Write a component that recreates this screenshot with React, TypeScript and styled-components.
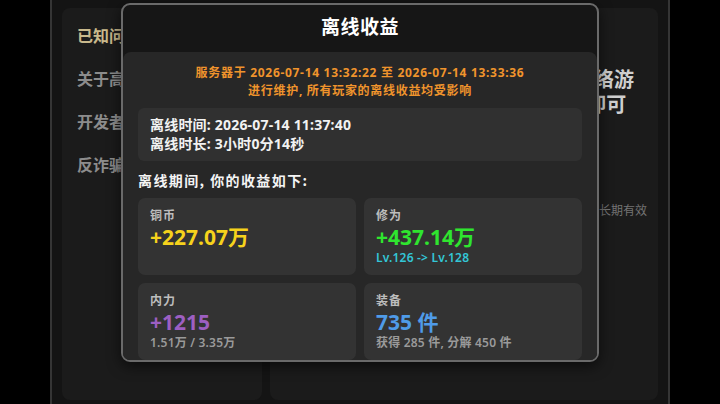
import React from "react";
import styled, { createGlobalStyle } from "styled-components";

const GlobalStyle = createGlobalStyle`
  html, body {
    margin: 0;
    padding: 0;
    background: #000;
  }
  body {
    font-family: "Noto Sans", "Noto Sans CJK SC", sans-serif;
    color: #fff;
  }
  * {
    box-sizing: border-box;
  }
`;

const MENU_ITEMS = ["已知问题", "关于高自由度", "开发者的话", "反诈骗提醒"];

const NOTICE_LINES = [
  "服务器于 2026-07-14 13:32:22 至 2026-07-14 13:33:36",
  "进行维护, 所有玩家的离线收益均受影响",
];

const REWARDS = [
  { label: "铜币", value: "+227.07万", color: "#f6d21c", sub: "", subColor: "" },
  { label: "修为", value: "+437.14万", color: "#2fe52f", sub: "Lv.126 -> Lv.128", subColor: "#33c6d6" },
  { label: "内力", value: "+1215", color: "#9d5fc2", sub: "1.51万 / 3.35万", subColor: "#9a9a9a" },
  { label: "装备", value: "735 件", color: "#4f9be8", sub: "获得 285 件, 分解 450 件", subColor: "#9a9a9a" },
];

const App: React.FC = () => {
  return (
    <>
      <GlobalStyle />
      <StyledStage>
        <StyledFrame>
          <StyledSidebar>
            {MENU_ITEMS.map((item, index) => (
              <StyledMenuItem key={item} active={index === 0}>
                {item}
              </StyledMenuItem>
            ))}
          </StyledSidebar>
          <StyledContent>
            <StyledHeadline>
              健康游戏忠告：本作品为非营利网络游
              <br />
              戏，游戏内所有内容均免费开放 即可
            </StyledHeadline>
            <StyledNote>本公告内容自发布之日起长期有效</StyledNote>
          </StyledContent>
        </StyledFrame>

        <StyledModal>
          <StyledModalHeader>离线收益</StyledModalHeader>
          <StyledModalBody>
            <StyledNotice>
              {NOTICE_LINES.map((line) => (
                <StyledNoticeLine key={line}>{line}</StyledNoticeLine>
              ))}
            </StyledNotice>
            <StyledInfoBox>
              <StyledInfoLine>离线时间: 2026-07-14 11:37:40</StyledInfoLine>
              <StyledInfoLine>离线时长: 3小时0分14秒</StyledInfoLine>
            </StyledInfoBox>
            <StyledSectionTitle>离线期间, 你的收益如下:</StyledSectionTitle>
            <StyledGrid>
              {REWARDS.map((r) => (
                <StyledCard key={r.label}>
                  <StyledCardLabel>{r.label}</StyledCardLabel>
                  <StyledCardValue color={r.color}>{r.value}</StyledCardValue>
                  {r.sub && <StyledCardSub color={r.subColor}>{r.sub}</StyledCardSub>}
                </StyledCard>
              ))}
            </StyledGrid>
          </StyledModalBody>
        </StyledModal>
      </StyledStage>
    </>
  );
};
export default App;

const StyledStage = styled.div`
  position: relative;
  width: 720px;
  height: 404px;
  display: flex;
  justify-content: center;
  overflow: hidden;
`;

const StyledFrame = styled.div`
  width: 620px;
  height: 404px;
  border-left: 2px solid #353535;
  border-right: 2px solid #353535;
  background: #141414;
  padding: 8px 10px 4px;
  display: grid;
  grid-template-columns: 200px 1fr;
  gap: 8px;
`;

const StyledSidebar = styled.div`
  background: #1b1b1b;
  border-radius: 8px;
  padding: 6px 15px;
  overflow: hidden;
`;

const StyledMenuItem = styled.div<{ active?: boolean }>`
  height: 43px;
  line-height: 43px;
  font-family: "Noto Sans CJK SC", sans-serif;
  font-size: 16px;
  font-weight: 700;
  white-space: nowrap;
  color: ${(props) => (props.active ? "#c9b98c" : "#8c8c8c")};
`;

const StyledContent = styled.div`
  background: #1b1b1b;
  border-radius: 8px;
  padding: 58px 11px 0;
  overflow: hidden;
`;

const StyledHeadline = styled.h1`
  margin: 0;
  text-align: center;
  white-space: pre;
  font-family: "Noto Sans CJK SC", sans-serif;
  font-size: 20px;
  line-height: 25px;
  font-weight: 700;
  color: #cfcfcf;
`;

const StyledNote = styled.p`
  margin: 86px 0 0;
  text-align: right;
  font-family: "Noto Sans CJK SC", sans-serif;
  font-size: 12px;
  line-height: 16px;
  color: #747474;
`;

const StyledModal = styled.div`
  position: absolute;
  top: 3px;
  left: 121px;
  width: 478px;
  height: 359px;
  border: 2px solid #6a6a6a;
  border-radius: 9px;
  background: #161616;
  overflow: hidden;
  display: flex;
  flex-direction: column;
  box-shadow: 0 4px 14px rgba(0, 0, 0, 0.6);
`;

const StyledModalHeader = styled.header`
  height: 47px;
  flex-shrink: 0;
  padding-bottom: 6px;
  display: flex;
  align-items: center;
  justify-content: center;
  font-family: "Noto Sans CJK SC", sans-serif;
  font-size: 19px;
  font-weight: 700;
  letter-spacing: 0.5px;
  color: #fff;
`;

const StyledModalBody = styled.section`
  flex: 1;
  background: #272727;
  border-radius: 8px 8px 0 0;
  padding: 12px 15px 14px;
  overflow: hidden;
`;

const StyledNotice = styled.div`
  margin: 0 0 8px;
  display: flex;
  flex-direction: column;
  align-items: center;
`;

const StyledNoticeLine = styled.p`
  margin: 0;
  font-size: 12px;
  line-height: 18px;
  font-weight: 700;
  letter-spacing: 0.7px;
  color: #f0942c;
`;

const StyledInfoBox = styled.div`
  background: #303030;
  border-radius: 6px;
  padding: 7px 12px 8px;
`;

const StyledInfoLine = styled.div`
  font-size: 14px;
  line-height: 19px;
  font-weight: 700;
  letter-spacing: 0.2px;
  color: #f2f2f2;
`;

const StyledSectionTitle = styled.h2`
  margin: 9px 0 8px;
  font-family: "Noto Sans CJK SC", sans-serif;
  font-size: 14px;
  line-height: 20px;
  font-weight: 700;
  letter-spacing: 1.4px;
  color: #f4f4f4;
`;

const StyledGrid = styled.div`
  display: grid;
  grid-template-columns: 1fr 1fr;
  gap: 8px;
`;

const StyledCard = styled.div`
  background: #333333;
  border-radius: 7px;
  padding: 8px 12px 9px;
  min-height: 77px;
`;

const StyledCardLabel = styled.div`
  font-family: "Noto Sans CJK SC", sans-serif;
  font-size: 12px;
  line-height: 18px;
  font-weight: 700;
  letter-spacing: 1px;
  color: #bdbdbd;
`;

const StyledCardValue = styled.div<{ color: string }>`
  font-size: 21px;
  line-height: 26px;
  font-weight: 700;
  color: ${(props) => props.color};
`;

const StyledCardSub = styled.div<{ color: string }>`
  font-size: 12px;
  line-height: 16px;
  font-weight: 600;
  letter-spacing: 0.2px;
  color: ${(props) => props.color};
`;
